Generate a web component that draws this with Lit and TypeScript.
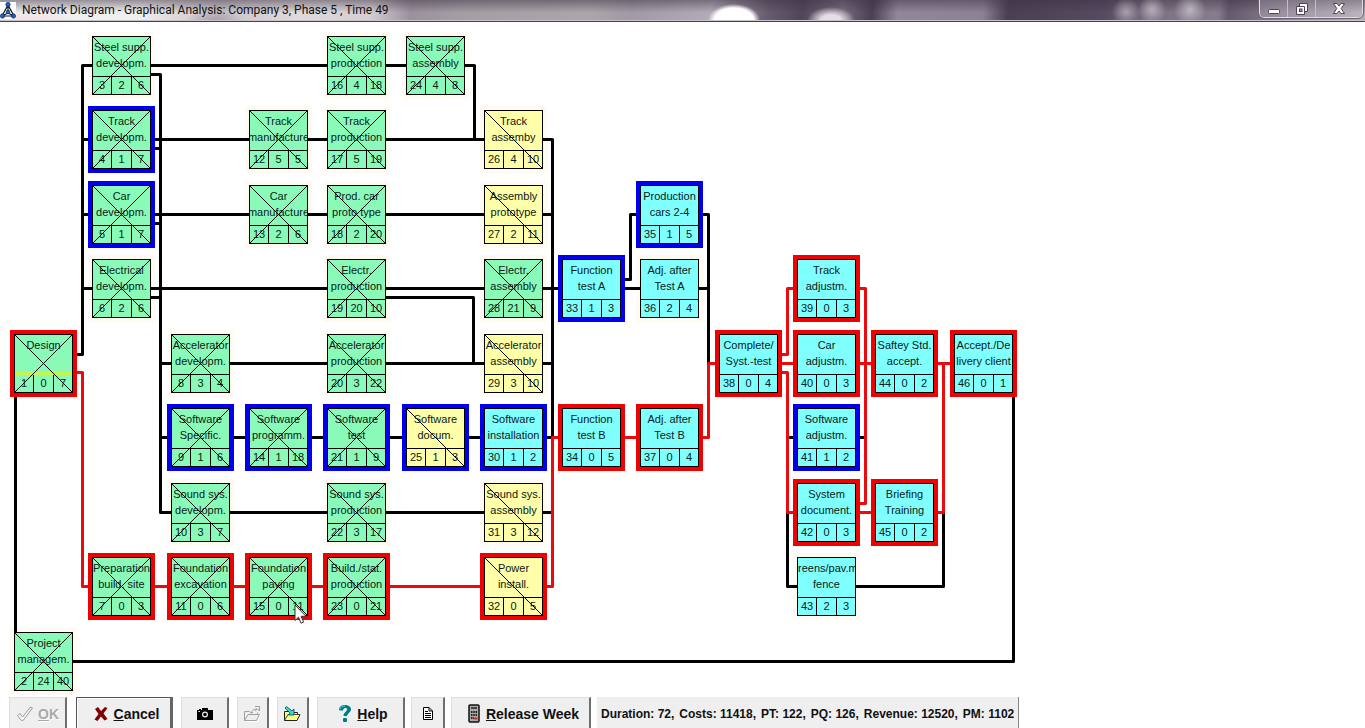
import { LitElement, html, svg, css, nothing } from "lit";
import { customElement, property } from "lit/decorators.js";
import { classMap } from "lit/directives/class-map.js";
import { styleMap } from "lit/directives/style-map.js";

type Fill = "done" | "active" | "open";
type Mark = "" | "blue" | "red";

interface Task {
  id: number;
  col: number;
  row: number;
  lines: [string, string];
  fill: Fill;
  mark: Mark;
  slack: number;
  weeks: number;
  flag?: "progress" | "start";
}

/* Positions of the grid tracks on the drawing canvas. */
const COLS = [14, 92, 171, 249, 327, 406, 484, 562, 640, 719, 797, 875, 954];
const ROWS = [14, 88, 163, 237, 312, 386, 461, 535, 610];

const t = (
  id: number, slack: number, weeks: number, col: number, row: number,
  a: string, b: string, fill: Fill, mark: Mark = "", flag?: Task["flag"],
): Task => ({ id, slack, weeks, col, row, lines: [a, b], fill, mark, flag });

const TASKS: Task[] = [
  t(1, 0, 7, 0, 4, "Design", "", "done", "red", "progress"),
  t(2, 24, 40, 0, 8, "Project", "managem.", "done"),
  t(3, 2, 6, 1, 0, "Steel supp.", "developm.", "done"),
  t(4, 1, 7, 1, 1, "Track", "developm.", "done", "blue"),
  t(5, 1, 7, 1, 2, "Car", "developm.", "done", "blue"),
  t(6, 2, 6, 1, 3, "Electrical", "developm.", "done"),
  t(7, 0, 3, 1, 7, "Preparation", "build. site", "done", "red"),
  t(8, 3, 4, 2, 4, "Accelerator", "developm.", "done"),
  t(9, 1, 6, 2, 5, "Software", "Specific.", "done", "blue"),
  t(10, 3, 7, 2, 6, "Sound sys.", "developm.", "done"),
  t(11, 0, 6, 2, 7, "Foundation", "excavation", "done", "red"),
  t(12, 5, 5, 3, 1, "Track", "manufacture", "done"),
  t(13, 2, 6, 3, 2, "Car", "manufacture", "done"),
  t(14, 1, 18, 3, 5, "Software", "programm.", "done", "blue"),
  t(15, 0, 11, 3, 7, "Foundation", "paving", "done", "red"),
  t(16, 4, 18, 4, 0, "Steel supp.", "production", "done"),
  t(17, 5, 19, 4, 1, "Track", "production", "done"),
  t(18, 2, 20, 4, 2, "Prod. car", "proto type", "done"),
  t(19, 20, 10, 4, 3, "Electr.", "production", "done"),
  t(20, 3, 22, 4, 4, "Accelerator", "production", "done"),
  t(21, 1, 9, 4, 5, "Software", "test", "done", "blue"),
  t(22, 3, 17, 4, 6, "Sound sys.", "production", "done"),
  t(23, 0, 21, 4, 7, "Build./stat.", "production", "done", "red"),
  t(24, 4, 8, 5, 0, "Steel supp.", "assembly", "done"),
  t(25, 1, 3, 5, 5, "Software", "docum.", "active", "blue"),
  t(26, 4, 10, 6, 1, "Track", "assemby", "active"),
  t(27, 2, 11, 6, 2, "Assembly", "prototype", "active"),
  t(28, 21, 9, 6, 3, "Electr.", "assembly", "done"),
  t(29, 3, 10, 6, 4, "Accelerator", "assembly", "active"),
  t(30, 1, 2, 6, 5, "Software", "installation", "open", "blue"),
  t(31, 3, 12, 6, 6, "Sound sys.", "assembly", "active"),
  t(32, 0, 5, 6, 7, "Power", "install.", "active", "red"),
  t(33, 1, 3, 7, 3, "Function", "test A", "open", "blue"),
  t(34, 0, 5, 7, 5, "Function", "test B", "open", "red"),
  t(35, 1, 5, 8, 2, "Production", "cars 2-4", "open", "blue"),
  t(36, 2, 4, 8, 3, "Adj. after", "Test A", "open"),
  t(37, 0, 4, 8, 5, "Adj. after", "Test B", "open", "red"),
  t(38, 0, 4, 9, 4, "Complete/", "Syst.-test", "open", "red"),
  t(39, 0, 3, 10, 3, "Track", "adjustm.", "open", "red"),
  t(40, 0, 3, 10, 4, "Car", "adjustm.", "open", "red"),
  t(41, 1, 2, 10, 5, "Software", "adjustm.", "open", "blue"),
  t(42, 0, 3, 10, 6, "System", "document.", "open", "red"),
  t(43, 2, 3, 10, 7, "reens/pav.m", "fence", "open", "", "start"),
  t(44, 0, 2, 11, 4, "Saftey Std.", "accept.", "open", "red"),
  t(45, 0, 2, 11, 6, "Briefing", "Training", "open", "red"),
  t(46, 0, 1, 12, 4, "Accept./De", "livery client", "open", "red"),
];

const BLACK_LINKS = [
  "M76 332.5H82.5V43.5H406", "M82.5 117.5H484", "M82.5 192.5H484", "M82.5 266.5H562",
  "M151 52.5H160.5V490.5H484", "M151 126.5H160.5", "M151 201.5H160.5", "M151 275.5H160.5",
  "M160.5 341.5H484", "M160.5 415.5H552.5", "M460 43.5H474.5V117.5",
  "M386 275.5H473.5V341.5", "M540 117.5H552.5V415.5", "M540 192.5H552.5",
  "M540 341.5H552.5", "M540 490.5H552.5",
  "M620 266.5H708.5", "M620 257.5H630.5V192.5H640", "M699 192.5H708.5V341.5",
  "M787.5 415.5H865.5", "M787.5 490V564.5H943.5V490",
  "M15.5 370V612", "M72 639.5H1013.5V370",
];
const RED_LINKS = [
  "M76 350.5H82.5V564.5H552.5V415.5H708.5V341.5H954",
  "M777 332.5H787.5V266.5H865.5V481.5H855", "M777 350.5H787.5V490.5H943.5V341.5",
];

@customElement("task-node")
export class TaskNode extends LitElement {
  @property({ attribute: false }) task!: Task;

  static styles = css`
    :host { display: block; }
    .box {
      position: relative;
      box-sizing: border-box;
      width: 59px;
      height: 59px;
      display: grid;
      grid-template-columns: minmax(0, 1fr);
      grid-template-rows: 40px 17px;
      border: 1px solid #000;
      color: #0a1a16;
      font: 11px/16px "Liberation Sans", Arial, sans-serif;
      overflow: hidden;
    }
    .done { background: #8afab9; }
    .active { background: #ffffa9; }
    .open { background: #80ffff; }
    .name { padding-top: 2px; border-bottom: 1px solid #000; }
    .line { display: flex; justify-content: center; height: 16px; white-space: nowrap; }
    .start .line:first-child { justify-content: flex-start; }
    .nums {
      display: grid;
      grid-template-columns: 18px 19px 18px;
      gap: 1px;
      line-height: 17px;
      text-align: center;
    }
    .num + .num { box-shadow: -1px 0 0 #000; }
    .cross { position: absolute; left: -1px; top: -1px; }
    .progress { position: absolute; left: 0; right: 0; top: 37px; height: 3px; background: #c6f54e; }
  `;

  render() {
    const k = this.task;
    return html`
      <div class=${classMap({ box: true, [k.fill]: true })}>
        <div class=${classMap({ name: true, start: k.flag === "start" })}>
          <div class="line"><span>${k.lines[0]}</span></div>
          <div class="line"><span>${k.lines[1]}</span></div>
        </div>
        <div class="nums">
          <div class="num">${k.id}</div><div class="num">${k.slack}</div><div class="num">${k.weeks}</div>
        </div>
        ${k.flag === "progress" ? html`<div class="progress"></div>` : nothing}
        ${k.fill === "open" ? nothing : html`
          <svg class="cross" width="59" height="59" viewBox="0 0 59 59" fill="none" stroke="#000" stroke-width="1" shape-rendering="crispEdges" aria-hidden="true">
            <path d=${k.fill === "done" ? "M0 0L59 59M0 59L59 0" : "M0 0L59 59"}></path>
          </svg>`}
      </div>`;
  }
}

@customElement("network-chart")
export class NetworkChart extends LitElement {
  static styles = css`
    :host { display: block; position: relative; overflow: hidden; background: #fff; }
    .links { position: absolute; inset: 0; width: 100%; height: 100%; }
    .node { position: absolute; }
    .pointer { position: absolute; left: 294px; top: 582px; }
  `;

  render() {
    return html`
      <svg class="links" fill="none" stroke-width="3" aria-hidden="true">
        ${TASKS.filter((k) => !k.mark).map((k) =>
          svg`<rect x=${COLS[k.col] - 4} y=${ROWS[k.row] - 4} width="67" height="67" fill="#fffbf3"></rect>`)}
        ${BLACK_LINKS.map((d) => svg`<path d=${d} stroke="#000" stroke-linejoin="round"></path>`)}
        ${RED_LINKS.map((d) => svg`<path d=${d} stroke="#e80c0e" stroke-linejoin="round"></path>`)}
        ${TASKS.filter((k) => k.mark).map((k) =>
          svg`<rect x=${COLS[k.col] - 4} y=${ROWS[k.row] - 4} width="67" height="67" fill=${k.mark === "red" ? "#f00000" : "#0000ee"}></rect>`)}
      </svg>
      ${TASKS.map((k) => html`
        <task-node class="node" .task=${k}
          style=${styleMap({ left: `${COLS[k.col]}px`, top: `${ROWS[k.row]}px` })}></task-node>`)}
      <svg class="pointer" width="14" height="21" viewBox="0 0 14 21" aria-hidden="true">
        <path d="M1 1V16.500L4.500 13.200L7 19.200L9.600 18.100L7.100 12.300H12Z" fill="#fff" stroke="#333" stroke-width="1"></path>
      </svg>`;
  }
}

const ICON = {
  check: html`<svg width="18" height="16" viewBox="0 0 18 16" aria-hidden="true"><path d="M1.500 9.500L4 7.500L6.500 11L14.500 1L16.500 2L7 14.500H5.500Z" fill="#f8f8f8" stroke="#9a9a9a"></path></svg>`,
  cross: html`<svg width="14" height="14" viewBox="0 0 14 14" aria-hidden="true"><path d="M1 2L4 0L7 4L11 0L13.500 1L9.500 6.500L13.500 12L10.500 13.500L7 9.500L3.500 14L.5 12.500L4.500 7Z" fill="#800000"></path></svg>`,
  camera: html`<svg width="16" height="12" viewBox="0 0 16 12" aria-hidden="true"><path d="M0 2H2V1H4V2H5V0H11V2H16V12H0Z" fill="#000"></path><circle cx="8" cy="6.500" r="3" fill="#eee"></circle><circle cx="8" cy="6.500" r="1.800" fill="#000"></circle><path d="M1.500 3.500H3" stroke="#eee"></path></svg>`,
  openOut: html`<svg width="17" height="16" viewBox="0 0 17 16" fill="none" stroke="#a0a0a0" aria-hidden="true"><path d="M.5 14.500V5.500H5.500L6.500 6.500H9M.5 14.500H12.500L15.500 8.500H4L.5 14.500M13.500 8V6.500M7 7.500C8 4 10 3 13 3M11 .5H15.500V5L13.500 3L11 5"></path><path d="M1.500 15.500H13.500L16.500 9" stroke="#fff"></path></svg>`,
  openIn: html`<svg width="17" height="16" viewBox="0 0 17 16" aria-hidden="true"><path d="M.5 14.500V5.500H5L6 6.500H13.500V8.500H16L13 14.500Z" fill="#ffff80" stroke="#222"></path><path d="M.5 14.500L4 8.500H16" fill="none" stroke="#444"></path><path d="M2.500 .5L8 5L10 3V9H4.500L6.200 7L1 2Z" fill="#20e8e8" stroke="#134" stroke-width=".8"></path></svg>`,
  help: html`<svg width="12" height="17" viewBox="0 0 12 17" aria-hidden="true"><path d="M0 5C0 1.500 2.500 0 6 0S12 1.500 12 4.500C12 7.500 8.500 8 8 11H4.500C4.500 7.500 8 6.500 8 4.500C8 2.500 4.500 2.500 4 5.500H1Z" fill="#007c84"></path><path d="M1 4.500C1 2 3 1 6 1" fill="none" stroke="#38cfe0"></path><rect x="4" y="13" width="4" height="4" rx="1" fill="#007c84"></rect></svg>`,
  page: html`<svg width="10" height="13" viewBox="0 0 10 13" aria-hidden="true"><path d="M.5 .5H6L9.500 4V12.500H.5Z" fill="#fff" stroke="#000"></path><path d="M6 .5V4H9.500M2 4.500H5M2 6.500H8M2 8.500H8M2 10.500H8" fill="none" stroke="#000"></path></svg>`,
  calc: html`<svg width="12" height="19" viewBox="0 0 12 19" aria-hidden="true"><rect x="1" y="1" width="10" height="17" rx="1" fill="#aaa" stroke="#111" stroke-width="1.500"></rect><rect x="3" y="3" width="6" height="2" fill="#444"></rect><path d="M3 8H9M3 11H9M3 14H6" stroke="#222" stroke-width="2" stroke-dasharray="1.500 .75"></path><path d="M6 14.500H9.500" stroke="#c33" stroke-width="2"></path></svg>`,
};

@customElement("app-root")
export class AppRoot extends LitElement {
  static styles = css`
    :host {
      display: flex;
      flex-direction: column;
      height: 100vh;
      background: #fff;
      overflow: hidden;
    }
    .title {
      flex: none;
      display: flex;
      align-items: stretch;
      height: 22px;
      box-sizing: border-box;
      border-bottom: 1px solid #454147;
      box-shadow: inset 0 -1px 0 #c9c4cc;
      background:
        radial-gradient(ellipse 26px 16px at 734px 20px, #fff 75%, transparent 100%),
        radial-gradient(ellipse 24px 13px at 831px 20px, #e6dde6 40%, transparent 100%),
        radial-gradient(circle at 1126px 12px, #a79fad, transparent 14px),
        radial-gradient(circle at 1152px 10px, #b5adb9, transparent 14px),
        radial-gradient(circle at 1190px 10px, #bcb4bf, transparent 16px),
        radial-gradient(ellipse 50px 12px at 25px 22px, #f6dede, transparent),
        radial-gradient(ellipse 30px 14px at 215px 22px, #a79aa8, transparent),
        linear-gradient(180deg, rgba(60, 50, 66, .5), rgba(60, 50, 66, 0) 60%),
        linear-gradient(95deg, #efeeee 0, #f1eeee 140px, #dad6d8 180px, #cbc5ca 220px, #dedadd 300px,
          #d4ced3 370px, #9a919d 410px, #a39ea4 460px, #aaa6aa 590px, #a199a6 630px, #b3acb8 710px,
          #685c70 765px, #51455a 800px, #776b7e 840px, #4b3f53 870px, #91879a 895px, #8c8294 980px,
          #4b3f52 1005px, #554a5f 1100px, #7c7284 1150px, #857c8d 1215px, #655a6e 1225px, #8f8696 1290px, #b4afb6 1365px);
    }
    .logo { align-self: center; }
    .caption {
      flex: 1;
      margin: 0;
      padding-left: 6px;
      font: 400 12px/21px Roboto, "Open Sans", sans-serif;
      color: #111;
      white-space: nowrap;
    }
    .window-controls {
      display: flex;
      height: 18px;
      margin-right: 2px;
      box-sizing: border-box;
      border: 1px solid #e0dce2;
      border-top: 0;
      border-radius: 0 0 5px 5px;
      outline: 1px solid #6d6574;
      background: rgba(210, 204, 214, .25);
    }
    .ctl {
      display: grid;
      place-items: center;
      width: 28px;
      padding: 0;
      border: 0;
      border-right: 1px solid #c3bdc7;
      background: none;
    }
    .ctl.wide { width: 46px; border-right: 0; }
    network-chart { flex: 1; min-height: 0; }
    .toolbar {
      flex: none;
      display: flex;
      height: 31px;
      padding-left: 9px;
      overflow: hidden;
      font: 700 14px/18px "Liberation Sans", Arial, sans-serif;
    }
    .btn {
      flex: none;
      display: flex;
      align-items: center;
      justify-content: center;
      gap: 6px;
      height: 34px;
      box-sizing: border-box;
      padding: 0;
      font: inherit;
      color: #111;
      background: #efefef;
      border: 1px solid #dedede;
      border-right: 2px solid #6f6f6f;
      border-bottom: 2px solid #6f6f6f;
      white-space: nowrap;
    }
    .btn:disabled { color: #a8a8a8; text-shadow: 1px 1px 0 #fff; }
    .ok { width: 58px; gap: 4px; margin-right: 9px; }
    .cancel { width: 97px; border: 1px solid #555; border-right: 3px solid #666; border-bottom: 2px solid #666; box-shadow: inset 1px 1px 0 #fff; margin-right: 8px; }
    .cam { width: 48px; margin-right: 8px; }
    .small { width: 32px; margin-right: 8px; }
    .help { width: 88px; margin-right: 6px; }
    .cancel, .help, .release { padding-left: 6px; }
    .doc { width: 34px; margin-right: 6px; }
    .release { width: 140px; margin-right: 6px; }
    .status {
      flex: none;
      display: flex;
      align-items: center;
      gap: 5px;
      height: 34px;
      box-sizing: border-box;
      padding: 0 4px;
      border-right: 1px solid #888;
      background: #efefef;
      color: #111;
      font-size: 12px;
      white-space: nowrap;
    }
  `;

  render() {
    return html`
      <header class="title">
        <svg class="logo" width="16" height="17" viewBox="0 0 16 17" aria-hidden="true">
          <rect width="16" height="17" fill="#fff"></rect>
          <path d="M8 3L2 14H14ZM8 3V11L2 14M8 11L14 14" fill="none" stroke="#111" stroke-width="1.200"></path>
          <g fill="#1c5fc0" stroke="#0a2a60" stroke-width=".6"><circle cx="8" cy="2.500" r="2.200"></circle><circle cx="8" cy="10" r="1.900"></circle><circle cx="2.500" cy="14" r="2.200"></circle><circle cx="13.500" cy="14" r="2.200"></circle></g>
        </svg>
        <h1 class="caption">Network Diagram - Graphical Analysis: Company 3, Phase 5 , Time 49</h1>
        <div class="window-controls">
          <button class="ctl" aria-label="Minimize"><svg width="12" height="16" viewBox="0 0 12 16"><rect x=".5" y="8.500" width="11" height="4" rx="1" fill="#fff" stroke="#4c4654"></rect></svg></button>
          <button class="ctl" aria-label="Restore"><svg width="12" height="12" viewBox="0 0 12 12" fill="#fff" stroke="#4c4654"><path d="M3.500 .5H11.500V8.500H3.500Z"></path><path d="M.5 3.500H8.500V11.500H.5Z"></path><rect x="3.500" y="6" width="2.500" height="2.500" fill="#aaa3b0"></rect></svg></button>
          <button class="ctl wide" aria-label="Close"><svg width="12" height="11" viewBox="0 0 12 11"><path d="M.5 .5H4L6 3L8 .5H11.500L8.200 5.500L11.500 10.500H8L6 8L4 10.500H.5L3.800 5.500Z" fill="#fff" stroke="#4c4654"></path></svg></button>
        </div>
      </header>
      <network-chart></network-chart>
      <footer class="toolbar">
        <button class="btn ok" disabled>${ICON.check}<span><u>O</u>K</span></button>
        <button class="btn cancel">${ICON.cross}<span><u>C</u>ancel</span></button>
        <button class="btn cam" aria-label="Snapshot">${ICON.camera}</button>
        <button class="btn small" disabled aria-label="Export">${ICON.openOut}</button>
        <button class="btn small" aria-label="Import">${ICON.openIn}</button>
        <button class="btn help">${ICON.help}<span><u>H</u>elp</span></button>
        <button class="btn doc" aria-label="Report">${ICON.page}</button>
        <button class="btn release">${ICON.calc}<span><u>R</u>elease Week</span></button>
        <div class="status">
          <span>Duration: 72,</span><span>Costs: 11418,</span><span>PT: 122,</span><span>PQ: 126,</span><span>Revenue: 12520,</span><span>PM: 1102</span>
        </div>
      </footer>`;
  }
}
